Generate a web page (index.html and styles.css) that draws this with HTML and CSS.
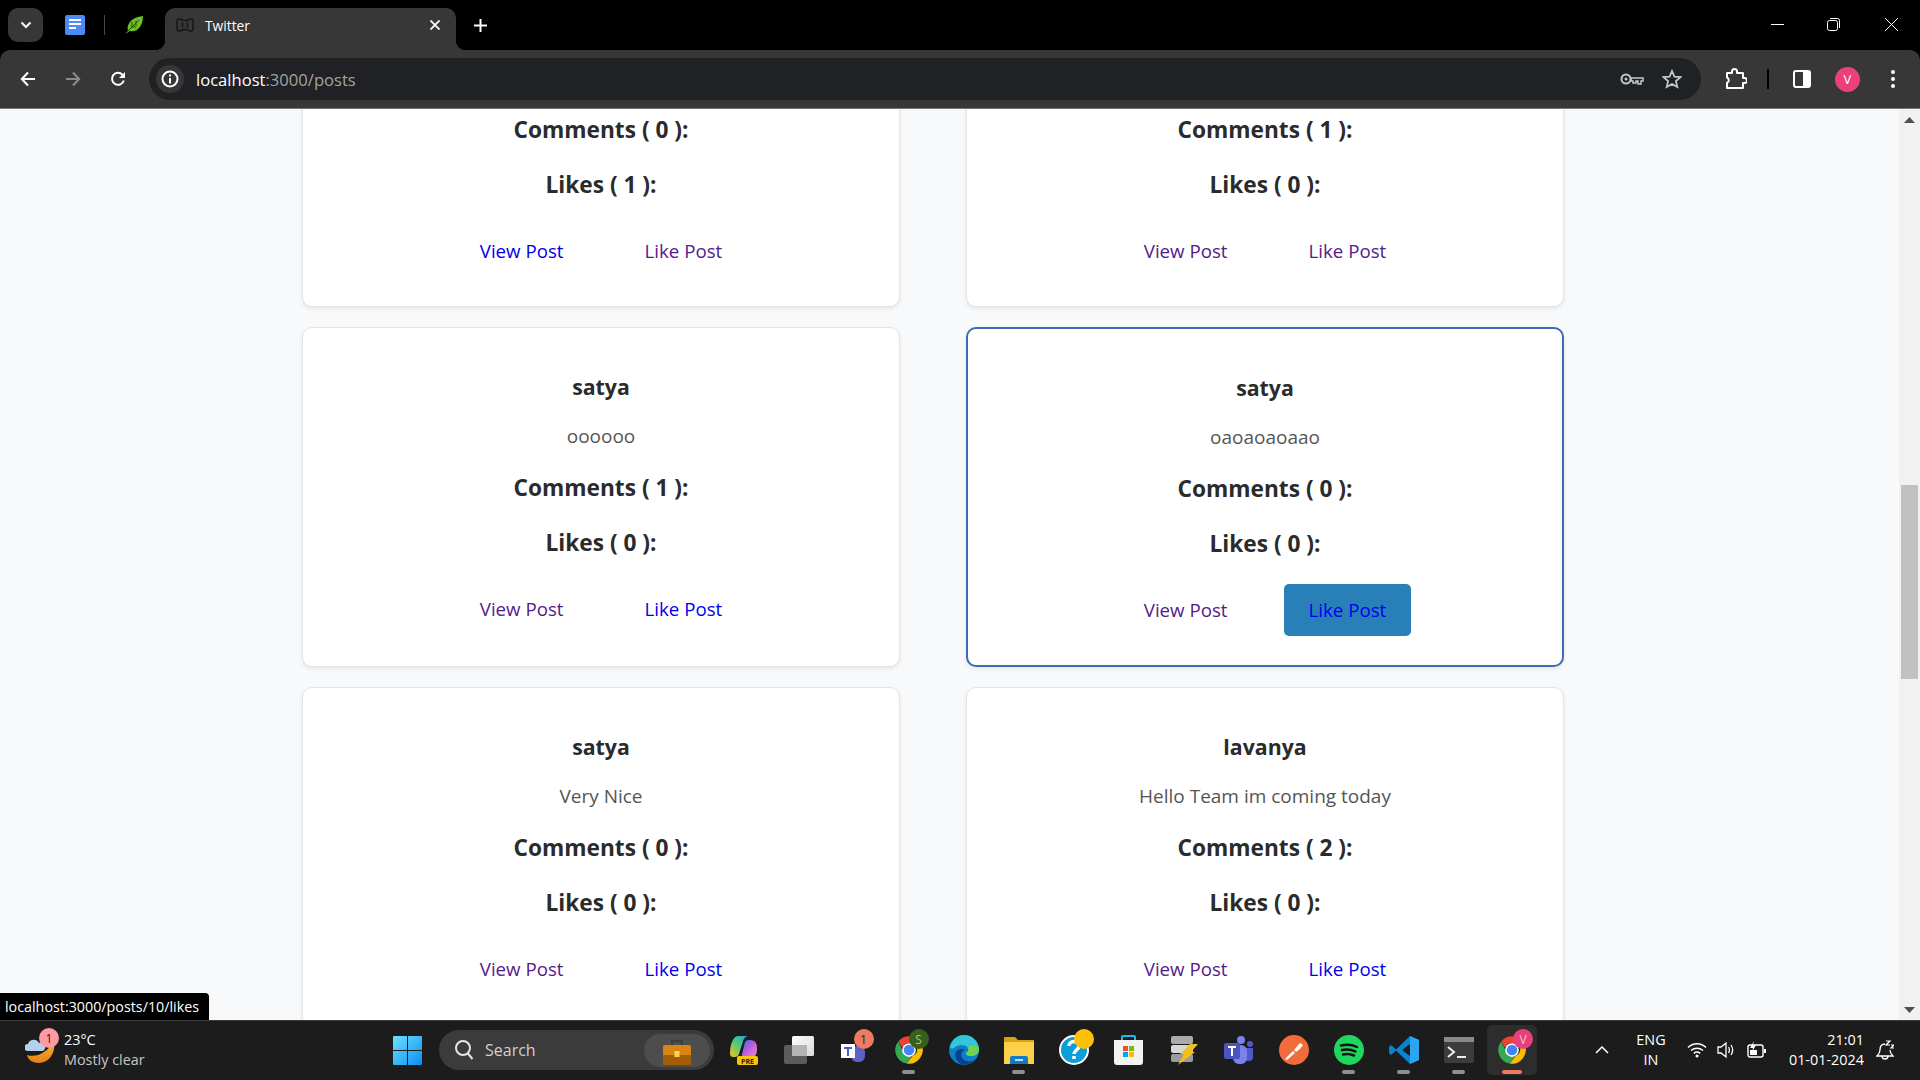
FILE: index.html
```html
<!DOCTYPE html>
<html lang="en">

<head>
    <meta charset="UTF-8">
    <meta name="viewport" content="width=device-width, initial-scale=1.0">
    <title>Twitter</title>
    <link rel="stylesheet" href="styles.css">
</head>

<body>
    <svg class="defs" width="0" height="0">
        <symbol id="chrome" viewBox="0 0 48 48">
            <path fill="#ea4335" d="M24 2a22 22 0 0 1 19 11H24a11 11 0 0 0-10.500 7.600L6.800 10.200A22 22 0 0 1 24 2z" />
            <path fill="#34a853" d="M6.800 10.200l9.500 19.300A11 11 0 0 0 29 33.500L20.500 45.700A22 22 0 0 1 6.800 10.200z" />
            <path fill="#fbbc04" d="M43 13a22 22 0 0 1-22.500 32.700L30 33a11 11 0 0 0 1.500-20z" />
            <circle cx="24" cy="24" r="11" fill="#fff" />
            <circle cx="24" cy="24" r="8.500" fill="#4285f4" />
        </symbol>
    </svg>

    <div class="tabstrip">
        <button class="tab-search">
            <svg width="12" height="8" viewBox="0 0 12 8"><path d="M1.500 1.500L6 6l4.500-4.500" fill="none" stroke="#fff" stroke-width="2" /></svg>
        </button>
        <div class="pinned">
            <svg width="20" height="20" viewBox="0 0 20 20">
                <rect width="20" height="20" rx="2" fill="#4c8bf5" />
                <path d="M4 5h12M4 9h12M4 13h7" stroke="#fff" stroke-width="2" />
            </svg>
        </div>
        <span class="pinned-sep"></span>
        <div class="pinned">
            <svg width="20" height="20" viewBox="0 0 20 20">
                <path d="M1 19l3-3C2 9 8 2 19 1c0 10-6 17-13 15z" fill="#6cc024" />
                <path d="M4 16L15 5M8 7v5M12 6v5M7 12h5" stroke="#1c4d0a" stroke-width="1" fill="none" />
            </svg>
        </div>
        <div class="tab">
            <svg class="tab-favicon" width="18" height="18" viewBox="0 0 18 18">
                <path d="M1 5q0-2 2-2 3 0 4 1.500h4Q12 3 15 3q2 0 2 2v8q0 2-2 2-3 0-4-1.500H7Q6 15 3 15q-2 0-2-2zM6.500 6.500v5M11.500 6.500v5" fill="none" stroke="#141414" stroke-width="1.400" />
            </svg>
            <span class="tab-title">Twitter</span>
            <svg class="tab-close" width="10" height="10" viewBox="0 0 10 10"><path d="M0.500 0.500l9 9M9.500 0.500l-9 9" stroke="#fff" stroke-width="1.800" /></svg>
        </div>
        <svg class="new-tab" width="13" height="13" viewBox="0 0 13 13"><path d="M6.500 0v13M0 6.500h13" stroke="#fff" stroke-width="2" /></svg>
        <div class="window-btns">
            <svg width="13" height="13" viewBox="0 0 13 13"><path d="M0 6.500h13" stroke="#fff" /></svg>
            <svg width="13" height="13" viewBox="0 0 13 13"><rect x="0.500" y="2.500" width="10" height="10" rx="2" fill="none" stroke="#fff" /><path d="M3 0.500h7.500q2 0 2 2V10" fill="none" stroke="#fff" /></svg>
            <svg class="win-close" width="13" height="13" viewBox="0 0 13 13"><path d="M0 0l13 13M13 0L0 13" stroke="#fff" /></svg>
        </div>
    </div>

    <div class="toolbar">
        <svg class="nav-btn" width="16" height="16" viewBox="0 0 16 16"><path d="M15 8H2M8 1.500L1.800 8 8 14.500" fill="none" stroke="#fff" stroke-width="2" /></svg>
        <svg class="nav-btn" width="16" height="16" viewBox="0 0 16 16"><path d="M1 8h13M8 1.500L14.200 8 8 14.500" fill="none" stroke="#8b8b8b" stroke-width="2" /></svg>
        <svg class="nav-btn" width="16" height="16" viewBox="0 0 16 16"><path d="M13.800 9.500A6 6 0 1 1 12.500 3.800" fill="none" stroke="#fff" stroke-width="2" /><path d="M15 1v6H9z" fill="#fff" /></svg>
        <div class="omnibox">
            <span class="site-info">
                <svg width="18" height="18" viewBox="0 0 18 18">
                    <circle cx="9" cy="9" r="7.500" fill="none" stroke="#fff" stroke-width="2" />
                    <path d="M9 8v5.500M9 4.500v2" stroke="#fff" stroke-width="2" />
                </svg>
            </span>
            <span class="url"><span class="url-host">localhost</span>:3000/posts</span>
            <svg class="omni-key" width="24" height="14" viewBox="0 0 24 14">
                <circle cx="6" cy="7" r="4.500" fill="none" stroke="#c4c7c5" stroke-width="2" />
                <circle cx="6" cy="7" r="1.500" fill="#c4c7c5" />
                <path d="M11 6h12v3h-2v3h-3V9h-2v2h-3V9h-2z" fill="none" stroke="#c4c7c5" stroke-width="1.500" />
            </svg>
            <svg class="omni-star" width="20" height="20" viewBox="0 0 20 20">
                <path d="M10 2l2.400 5.600 6.100.5-4.600 4 1.400 5.900L10 15l-5.300 3 1.400-5.900-4.600-4 6.100-.5z" fill="none" stroke="#c4c7c5" stroke-width="1.800" />
            </svg>
        </div>
        <svg class="tool-puzzle" width="22" height="22" viewBox="0 0 22 22">
            <path d="M2 5h5V3.500a2.500 2.500 0 0 1 5 0V5h6v5h1.500a2.500 2.500 0 0 1 0 5H18v5H2v-5a3 3 0 0 0 0-5.500z" fill="none" stroke="#fff" stroke-width="2" stroke-linejoin="round" />
        </svg>
        <span class="tool-sep"></span>
        <svg class="tool-panel" width="18" height="18" viewBox="0 0 18 18">
            <rect x="1" y="1" width="16" height="16" rx="2" fill="none" stroke="#fff" stroke-width="2" />
            <rect x="10" y="1" width="7" height="16" fill="#fff" />
        </svg>
        <span class="avatar">V</span>
        <svg class="tool-menu" width="4" height="18" viewBox="0 0 4 18"><circle cx="2" cy="2" r="2" fill="#fff" /><circle cx="2" cy="9" r="2" fill="#fff" /><circle cx="2" cy="16" r="2" fill="#fff" /></svg>
    </div>

    <div class="viewport">
        <main class="page">
            <div class="posts">
                <article class="card card-cut">
                    <h3 class="count">Comments ( 0 ):</h3>
                    <h3 class="count">Likes ( 1 ):</h3>
                    <div class="actions"><a class="fresh">View Post</a><a class="seen">Like Post</a></div>
                </article>
                <article class="card card-cut">
                    <h3 class="count">Comments ( 1 ):</h3>
                    <h3 class="count">Likes ( 0 ):</h3>
                    <div class="actions"><a class="seen">View Post</a><a class="seen">Like Post</a></div>
                </article>
                <article class="card">
                    <h3>satya</h3>
                    <p>oooooo</p>
                    <h3 class="count">Comments ( 1 ):</h3>
                    <h3 class="count">Likes ( 0 ):</h3>
                    <div class="actions"><a class="seen">View Post</a><a class="fresh">Like Post</a></div>
                </article>
                <article class="card card-hover">
                    <h3>satya</h3>
                    <p>oaoaoaoaao</p>
                    <h3 class="count">Comments ( 0 ):</h3>
                    <h3 class="count">Likes ( 0 ):</h3>
                    <div class="actions"><a class="seen">View Post</a><a class="fresh link-hover">Like Post</a></div>
                </article>
                <article class="card">
                    <h3>satya</h3>
                    <p>Very Nice</p>
                    <h3 class="count">Comments ( 0 ):</h3>
                    <h3 class="count">Likes ( 0 ):</h3>
                    <div class="actions"><a class="seen">View Post</a><a class="fresh">Like Post</a></div>
                </article>
                <article class="card">
                    <h3>lavanya</h3>
                    <p>Hello Team im coming today</p>
                    <h3 class="count">Comments ( 2 ):</h3>
                    <h3 class="count">Likes ( 0 ):</h3>
                    <div class="actions"><a class="seen">View Post</a><a class="fresh">Like Post</a></div>
                </article>
            </div>
        </main>
        <div class="scrollbar">
            <svg class="scroll-arrow" width="11" height="6" viewBox="0 0 11 6"><path d="M5.500 0L11 6H0z" fill="#505050" /></svg>
            <div class="scroll-thumb"></div>
            <svg class="scroll-arrow scroll-arrow-end" width="11" height="6" viewBox="0 0 11 6"><path d="M5.500 6L11 0H0z" fill="#505050" /></svg>
        </div>
        <div class="status-bubble">localhost:3000/posts/10/likes</div>
    </div>

    <footer class="taskbar">
        <div class="weather">
            <div class="weather-icon">
                <svg width="30" height="30" viewBox="0 0 30 30">
                    <defs>
                        <linearGradient id="moon" x1="0" y1="0" x2="0" y2="1">
                            <stop offset="0" stop-color="#f7b52c" />
                            <stop offset="1" stop-color="#e8801a" />
                        </linearGradient>
                    </defs>
                    <path d="M29 6c2 12-5 22-15 22C8 28 3 25 2 20c9 3 20-2 27-14z" fill="url(#moon)" />
                    <path d="M3 16a3.500 3.500 0 0 1 0-7 6 6 0 0 1 11-1 4.500 4.500 0 0 1 4 8z" fill="#b5d0ee" />
                </svg>
                <span class="badge badge-weather">1</span>
            </div>
            <div class="weather-text">
                <span class="weather-temp">23°C</span>
                <span class="weather-desc">Mostly clear</span>
            </div>
        </div>

        <svg class="start" width="29" height="29" viewBox="0 0 29 29">
            <defs>
                <linearGradient id="winblue" x1="0" y1="0" x2="1" y2="1">
                    <stop offset="0" stop-color="#6fe0ff" />
                    <stop offset="1" stop-color="#0a8ff0" />
                </linearGradient>
            </defs>
            <path d="M0 1q0-1 1-1h13v14H0zM15 0h13q1 0 1 1v13H15zM0 15h14v14H1q-1 0-1-1zM15 15h14v13q0 1-1 1H15z" fill="url(#winblue)" />
        </svg>

        <div class="search">
            <svg width="20" height="22" viewBox="0 0 20 22"><circle cx="9" cy="9" r="7" fill="none" stroke="#e6e6e6" stroke-width="2" /><path d="M13.500 14l5 6" stroke="#e6e6e6" stroke-width="2" /></svg>
            <span class="search-label">Search</span>
            <span class="search-promo">
                <svg width="28" height="28" viewBox="0 0 28 28">
                    <path d="M9 7V3h10v4" fill="none" stroke="#3c3c3c" stroke-width="2" />
                    <rect y="7" width="28" height="20" rx="2" fill="#d98414" />
                    <rect y="17" width="28" height="10" rx="1" fill="#a35c08" />
                    <rect x="11.500" y="13" width="5" height="6" fill="#ffd84a" />
                </svg>
            </span>
        </div>

        <div class="apps">
            <div class="app">
                <svg width="28" height="30" viewBox="0 0 28 30">
                    <defs>
                        <linearGradient id="copilot-l" x1="0" y1="1" x2="1" y2="0">
                            <stop offset="0" stop-color="#f5c518" />
                            <stop offset="0.5" stop-color="#52c878" />
                            <stop offset="1" stop-color="#1e9ff0" />
                        </linearGradient>
                        <linearGradient id="copilot-r" x1="0" y1="0" x2="1" y2="1">
                            <stop offset="0" stop-color="#2470e8" />
                            <stop offset="0.5" stop-color="#c05be0" />
                            <stop offset="1" stop-color="#f08cc0" />
                        </linearGradient>
                    </defs>
                    <path d="M8 1h11c-3 0-5 2-6 5l-4 13q-1 3-4 3H3q-3 0-3-4 0-8 3-13 2-4 5-4z" fill="url(#copilot-l)" />
                    <path d="M15 7q1-2 4-2c3 0 8 0 8 8 0 7-2 9-5 9h-8q-3 0-2-3z" fill="url(#copilot-r)" />
                    <rect x="7" y="21" width="21" height="9" rx="2" fill="#f8c40e" />
                    <text class="pre-text" x="17.500" y="28.500">PRE</text>
                </svg>
            </div>
            <div class="app">
                <svg width="30" height="28" viewBox="0 0 30 28">
                    <defs>
                        <linearGradient id="files-top" x1="0" y1="0" x2="1" y2="1">
                            <stop offset="0" stop-color="#fff" />
                            <stop offset="1" stop-color="#d8d8d8" />
                        </linearGradient>
                    </defs>
                    <rect x="0" y="9" width="23" height="19" rx="2" fill="#5c5c5c" />
                    <rect x="8" y="0" width="22" height="20" rx="1.500" fill="url(#files-top)" />
                    <rect x="8" y="9" width="15" height="11" fill="#b4b4b4" />
                </svg>
            </div>
            <div class="app">
                <svg width="26" height="24" viewBox="0 0 26 24">
                    <circle cx="20" cy="7" r="4" fill="#7b83eb" />
                    <rect x="10" y="8" width="14" height="16" rx="6" fill="#5b62c4" />
                    <rect y="6" width="14" height="14" fill="#fff" />
                    <path d="M3 9h8v2H8v7H6v-7H3z" fill="#5059c9" />
                </svg>
                <span class="badge badge-orange">1</span>
            </div>
            <div class="app app-on">
                <svg width="30" height="30"><use href="#chrome" /></svg>
                <span class="badge badge-green">S</span>
            </div>
            <div class="app">
                <svg width="30" height="30" viewBox="0 0 30 30">
                    <circle cx="15" cy="15" r="15" fill="#0f7ec8" />
                    <path d="M1 12C3 4 9 0 15 0c8 0 15 6 15 15 0 4-4 6-8 6-3 0-5-1-5-3 2-1 3-3 2-5-2-4-10-4-14 0-2 1-3 1-4-1z" fill="#33c6d8" />
                    <path d="M30 14c0 5-4 7-8 7-3 0-5-1-5-3 2-1 3-3 2-5 1-3 9-5 11 1z" fill="#6fd34d" />
                    <path d="M12 29c-5-3-7-8-5-12 2-3 6-4 9-2-4 1-5 6-2 9 3 3 8 3 12 1-3 3-9 6-14 4z" fill="#0c3f8c" />
                </svg>
            </div>
            <div class="app app-on">
                <svg width="30" height="30" viewBox="0 0 30 30">
                    <path d="M0 3q0-1 1-1h10l3 3h16v23q0 1-1 1H1q-1 0-1-1z" fill="#d9a00f" />
                    <path d="M0 7h30v21q0 1-1 1H1q-1 0-1-1z" fill="#fbd04b" />
                    <path d="M6 29v-6q0-2 2-2h14q2 0 2 2v6z" fill="#0f7ac6" />
                    <rect x="11" y="24" width="8" height="2" fill="#b8e0f8" />
                </svg>
            </div>
            <div class="app">
                <svg width="30" height="30" viewBox="0 0 30 30">
                    <circle cx="15" cy="15" r="14" fill="#0a9fd8" stroke="#fff" stroke-width="2" />
                    <path d="M10 11c0-6 10-6 10 0 0 4-5 4-5 8M15 21v3" fill="none" stroke="#fff" stroke-width="3.500" />
                </svg>
                <span class="badge badge-yellow"></span>
            </div>
            <div class="app">
                <svg width="29" height="30" viewBox="0 0 29 30">
                    <path d="M8 6V2q0-1 1-1h11q1 0 1 1v4" fill="none" stroke="#26b8e8" stroke-width="2" />
                    <path d="M0 5h29v22q0 3-3 3H3q-3 0-3-3z" fill="#f2f2f2" />
                    <rect x="9" y="11" width="5" height="5" fill="#f25022" />
                    <rect x="15" y="11" width="5" height="5" fill="#7fba00" />
                    <rect x="9" y="17" width="5" height="5" fill="#00a4ef" />
                    <rect x="15" y="17" width="5" height="5" fill="#ffb900" />
                </svg>
            </div>
            <div class="app">
                <svg width="28" height="30" viewBox="0 0 28 30">
                    <rect x="1" y="1" width="22" height="8" rx="2" fill="#aaa" />
                    <rect x="1" y="10" width="22" height="8" rx="2" fill="#d8d8d8" />
                    <rect x="1" y="19" width="22" height="8" rx="2" fill="#9c9c9c" />
                    <path d="M20 9h8l-7 8h4L8 30l6-11h-4z" fill="#f0c020" />
                </svg>
            </div>
            <div class="app">
                <svg width="30" height="28" viewBox="0 0 30 28">
                    <circle cx="17" cy="4" r="4" fill="#7b83eb" />
                    <circle cx="26" cy="8" r="3" fill="#5059c9" />
                    <path d="M21 12h8v9q0 4-4 4h-4z" fill="#5059c9" />
                    <rect x="9" y="9" width="14" height="19" rx="6" fill="#7b83eb" />
                    <rect y="7" width="16" height="16" rx="2" fill="#4b53bc" />
                    <path d="M4 10h8v2H9v8H7v-8H4z" fill="#fff" />
                </svg>
            </div>
            <div class="app">
                <svg width="30" height="30" viewBox="0 0 30 30">
                    <circle cx="15" cy="15" r="15" fill="#f26b3a" />
                    <path d="M6 24l8-8 2 2-8 7zM15 15l6-7 3 2-3 4-4 3z" fill="#fff" />
                </svg>
            </div>
            <div class="app app-on">
                <svg width="30" height="30" viewBox="0 0 30 30">
                    <circle cx="15" cy="15" r="15" fill="#1ed760" />
                    <path d="M7 10.500c6-1.500 11-1 16 1.500M8 15c5-1 9-.7 13.500 1.500M9 19.500c4-.8 7.500-.5 11 1" fill="none" stroke="#191414" stroke-width="2.500" stroke-linecap="round" />
                </svg>
            </div>
            <div class="app app-on">
                <svg width="30" height="30" viewBox="0 0 30 30">
                    <path d="M21 1l9 4v20l-9 4-14-13.500L2 20l-2-2v-6l2-2 5 4.500zm0 8l-8 6 8 6z" fill="#0a84d0" />
                    <path d="M21 1l9 4v20l-9 4z" fill="#2aa5ee" />
                </svg>
            </div>
            <div class="app app-on">
                <svg width="30" height="26" viewBox="0 0 30 26">
                    <rect width="30" height="26" rx="2" fill="#3c3c3c" />
                    <rect width="30" height="5" fill="#8a8a8a" />
                    <path d="M4 10l6 5-6 5" fill="none" stroke="#eee" stroke-width="2" />
                    <path d="M13 20h9" stroke="#eee" stroke-width="2" />
                </svg>
            </div>
            <div class="app app-active">
                <svg width="30" height="30"><use href="#chrome" /></svg>
                <span class="badge badge-pink">V</span>
            </div>
        </div>

        <div class="tray">
            <svg class="tray-up" width="14" height="8" viewBox="0 0 14 8"><path d="M1 7l6-6 6 6" fill="none" stroke="#fff" stroke-width="1.500" /></svg>
            <div class="lang"><span>ENG</span><span>IN</span></div>
            <svg class="tray-wifi" width="20" height="16" viewBox="0 0 20 16">
                <path d="M1 5.500c5-5 13-5 18 0M4 8.500c3.500-3 8.500-3 12 0M6.800 11.300c2-1.500 4.400-1.500 6.400 0" fill="none" stroke="#fff" stroke-width="1.500" />
                <circle cx="10" cy="14" r="1.500" fill="#fff" />
            </svg>
            <svg class="tray-vol" width="18" height="18" viewBox="0 0 18 18">
                <path d="M1 6h3l5-4v14l-5-4H1z" fill="none" stroke="#fff" stroke-width="1.300" />
                <path d="M11.500 6c1.300 2 1.300 4 0 6M14 4c2 3 2 7 0 10" fill="none" stroke="#fff" stroke-width="1.300" />
            </svg>
            <svg class="tray-batt" width="20" height="18" viewBox="0 0 20 18">
                <rect x="1" y="4" width="15" height="12" rx="2" fill="none" stroke="#fff" stroke-width="1.400" />
                <rect x="3" y="9" width="7" height="5" fill="#fff" />
                <rect x="17" y="8" width="2" height="4" fill="#fff" />
                <path d="M7 0L3 7h3l-1 4 4-7H6z" fill="#fff" />
            </svg>
            <div class="clock"><span>21:01</span><span>01-01-2024</span></div>
            <svg class="tray-bell" width="18" height="20" viewBox="0 0 18 20">
                <path d="M9 4C5 4 4 7 4 10c0 3-1 4-3 6h16c-2-2-3-3-3-6M6 16c0 4 6 4 6 0" fill="none" stroke="#fff" stroke-width="1.300" />
                <path d="M10 1h4l-4 4h4M15 5h3l-3 3h3" fill="none" stroke="#fff" stroke-width="1.200" />
            </svg>
        </div>
    </footer>
</body>

</html>
```

FILE: styles.css
```css
* {
    margin: 0;
    padding: 0;
    box-sizing: border-box;
}

html,
body {
    height: 100%;
    overflow: hidden;
}

body {
    display: flex;
    flex-direction: column;
    background: #000;
    font-family: "Open Sans", "Noto Sans", sans-serif;
}

.defs {
    position: absolute;
}

svg {
    display: block;
    flex: none;
}

/* chrome tabs */
.tabstrip {
    height: 50px;
    display: flex;
    align-items: center;
    padding-left: 8px;
    background: #000;
}

.tab-search {
    width: 35px;
    height: 34px;
    margin-right: 22px;
    display: flex;
    align-items: center;
    justify-content: center;
    border: none;
    border-radius: 10px;
    background: #373737;
}

.pinned {
    width: 20px;
}

.pinned-sep {
    width: 1px;
    height: 20px;
    margin: 0 19px 0 19px;
    background: #4a4a4a;
}

.tab {
    position: relative;
    width: 291px;
    height: 42px;
    margin-top: 8px;
    margin-left: 21px;
    display: flex;
    align-items: center;
    padding: 0 16px 8px 11px;
    background: #373737;
    border-radius: 10px 10px 0 0;
}

.tab::before,
.tab::after {
    content: '';
    position: absolute;
    bottom: 0;
    width: 10px;
    height: 10px;
}

.tab::before {
    left: -10px;
    background: radial-gradient(circle at 0 0, #000 10px, #373737 10.500px);
}

.tab::after {
    right: -10px;
    background: radial-gradient(circle at 100% 0, #000 10px, #373737 10.500px);
}

.tab-title {
    flex: 1;
    margin-left: 11px;
    color: #fff;
    font-size: 13.800px;
}

.new-tab {
    margin-left: 18px;
}

.window-btns {
    margin-left: auto;
    margin-right: 22px;
    margin-top: -2px;
    display: flex;
    gap: 43px;
}

.win-close {
    margin-left: 2px;
}

/* address bar */
.toolbar {
    height: 59px;
    display: flex;
    align-items: center;
    background: #373737;
    border-radius: 10px 10px 0 0;
    border-bottom: 1px solid #777;
    padding-left: 20px;
}

.nav-btn {
    margin-right: 29px;
}

.omnibox {
    width: 1552px;
    height: 42px;
    margin-left: -6px;
    display: flex;
    align-items: center;
    padding-left: 7px;
    background: #202124;
    border-radius: 21px;
}

.site-info {
    width: 28px;
    height: 28px;
    display: flex;
    align-items: center;
    justify-content: center;
    border-radius: 50%;
    background: #373737;
}

.url {
    flex: 1;
    margin-left: 12px;
    color: #a3a3a3;
    font-size: 16.600px;
}

.url-host {
    color: #fff;
}

.omni-key {
    margin-right: 18px;
}

.omni-star {
    margin-right: 19px;
}

.tool-puzzle {
    margin-left: 24px;
}

.tool-sep {
    width: 2px;
    height: 20px;
    margin: 0 24px 0 20px;
    background: #000;
}

.avatar {
    width: 25px;
    height: 25px;
    margin-left: 24px;
    display: flex;
    align-items: center;
    justify-content: center;
    border-radius: 50%;
    background: #ec407a;
    color: #fff;
    font-size: 13px;
}

.tool-menu {
    margin-left: 31px;
}

/* page */
.viewport {
    position: relative;
    flex: 1;
    min-height: 0;
    display: flex;
    overflow: hidden;
    background: #f8f9fa;
}

.page {
    flex: 1;
    min-width: 0;
    padding-left: 302px;
}

.posts {
    /* page is scrolled down, first row starts above the fold */
    margin-top: -140px;
    display: grid;
    grid-template-columns: 598px 598px;
    grid-template-rows: 338px;
    grid-auto-rows: 340px;
    column-gap: 66px;
    row-gap: 20px;
}

.card {
    padding-top: 44px;
    display: flex;
    flex-direction: column;
    align-items: center;
    background: #fff;
    border: 1px solid #e3e4e6;
    border-radius: 10px;
    box-shadow: 0 2px 4px rgba(0, 0, 0, 0.08);
    color: #2b2b2b;
}

.card-cut {
    padding-top: 145px;
}

.card-hover {
    border: 2px solid #3f6ab5;
}

.card h3 {
    font-size: 21.300px;
    font-weight: 700;
    line-height: 30px;
}

.card p {
    margin-top: 19px;
    color: #555;
    font-size: 19px;
    line-height: 30px;
}

.card .count {
    margin-top: 25px;
    font-size: 22.700px;
}

.card p + .count {
    margin-top: 22px;
}

.card-cut .count:first-child {
    margin-top: 0;
}

.actions {
    margin-top: 25px;
    display: flex;
    gap: 31px;
}

.actions a {
    padding: 0 25px;
    font-size: 18.700px;
    line-height: 52px;
    border-radius: 5px;
}

.fresh {
    color: #0000ee;
}

.seen {
    color: #551a8b;
}

.link-hover {
    background: #2980b9;
}

.scrollbar {
    width: 21px;
    display: flex;
    flex-direction: column;
    align-items: center;
    background: #f1f1f1;
}

.scroll-arrow {
    margin-top: 8px;
}

.scroll-arrow-end {
    margin-top: auto;
    margin-bottom: 7px;
}

.scroll-thumb {
    width: 17px;
    height: 194px;
    margin-top: 362px;
    background: #c1c1c1;
}

.status-bubble {
    position: absolute;
    left: 0;
    bottom: 0;
    height: 27px;
    padding: 0 10px 0 5px;
    background: #000;
    border-radius: 0 4px 0 0;
    color: #fff;
    font-size: 14.300px;
    line-height: 27px;
}

/* windows taskbar */
.taskbar {
    height: 60px;
    display: flex;
    align-items: center;
    padding-bottom: 1px;
    background: #1c1c1c;
    border-top: 1px solid #3c3c3c;
    color: #fff;
}

.weather {
    width: 393px;
    padding-left: 25px;
    display: flex;
    align-items: center;
    gap: 9px;
}

.weather-icon {
    position: relative;
}

.weather-text {
    display: flex;
    flex-direction: column;
    font-size: 14.400px;
    line-height: 20px;
}

.weather-desc {
    color: #c8c8c8;
}

.badge {
    position: absolute;
    width: 20px;
    height: 20px;
    top: 4px;
    right: 7.500px;
    display: flex;
    align-items: center;
    justify-content: center;
    border-radius: 50%;
    color: #222;
    font-size: 12px;
}

.badge-weather {
    top: -7px;
    right: -4px;
    background: #ff9aa2;
}

.badge-orange {
    background: #ee7a62;
}

.badge-green {
    background: #37601c;
    color: #a9c48f;
}

.badge-yellow {
    background: #ffc107;
}

.badge-pink {
    right: 4px;
    background: #e8407a;
    color: #f6c4d6;
}

.search {
    width: 275px;
    height: 40px;
    margin-left: 17px;
    display: flex;
    align-items: center;
    padding: 0 4px 0 15px;
    background: #3b3b3b;
    border-radius: 20px;
}

.search-label {
    flex: 1;
    margin-left: 11px;
    color: #d0d0d0;
    font-size: 16px;
}

.search-promo {
    width: 66px;
    height: 33px;
    display: flex;
    align-items: flex-end;
    justify-content: center;
    padding-bottom: 1px;
    background: #4d4d4d;
    border-radius: 17px;
}

.apps {
    margin-left: 2px;
    display: flex;
}

.app {
    position: relative;
    width: 55px;
    height: 50px;
    display: flex;
    align-items: center;
    justify-content: center;
}

.app-on::after,
.app-active::after {
    content: '';
    position: absolute;
    left: 21px;
    bottom: 1px;
    width: 13px;
    height: 4px;
    border-radius: 2px;
    background: #8f8f8f;
}

.app-active {
    width: 50px;
    margin-left: 1px;
    background: #2d2d2d;
    border-radius: 5px;
}

.app-active::after {
    left: 15px;
    width: 20px;
    background: #ee7a62;
}

.pre-text {
    fill: #222;
    font-size: 7px;
    font-weight: 700;
    text-anchor: middle;
}

.tray {
    flex: 1;
    display: flex;
    align-items: center;
    font-size: 14.400px;
}

.tray-up {
    margin-left: 58px;
}

.lang {
    width: 40px;
    margin-left: 22px;
    display: flex;
    flex-direction: column;
    align-items: center;
    line-height: 20px;
}

.tray-wifi {
    margin-left: 16px;
}

.tray-vol {
    margin-left: 10px;
}

.tray-batt {
    margin-left: 12px;
}

.clock {
    width: 97px;
    display: flex;
    flex-direction: column;
    align-items: flex-end;
    line-height: 20px;
}

.tray-bell {
    margin-left: 12px;
}
```
